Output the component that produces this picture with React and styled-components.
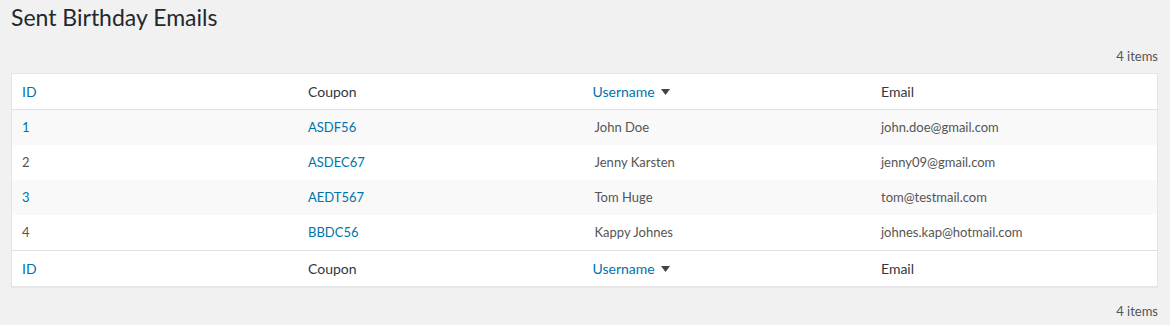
import React from 'react';
import styled, { createGlobalStyle } from 'styled-components';

const GlobalStyle = createGlobalStyle`
  html, body {
    margin: 0;
    padding: 0;
    background: #f1f1f1;
  }
  body {
    font-family: Lato, "Open Sans", sans-serif;
    color: #444;
    font-size: 13px;
  }
`;

const Wrap = styled.div`
  padding: 0 12px 0 11px;
`;

const Title = styled.h1`
  margin: 0;
  padding-top: 2px;
  font-size: 23px;
  font-weight: 400;
  line-height: 30px;
  color: #23282d;
`;

const TableNav = styled.div`
  display: flex;
  justify-content: flex-end;
  padding: ${(p) => (p.bottom ? '15px 0 5px' : '15px 0 8px')};
  font-size: 13px;
  line-height: 18px;
  color: #555;
`;

const Table = styled.table`
  width: 100%;
  table-layout: fixed;
  border-collapse: collapse;
  background: #fff;
  border: 1px solid #e5e5e5;
  box-shadow: 0 1px 1px rgba(0, 0, 0, 0.04);
`;

const Th = styled.th`
  text-align: left;
  font-weight: 400;
  font-size: 14px;
  line-height: 19px;
  padding: ${(p) => (p.sorted ? '8px 8px' : '8px 10px')};
  color: #32373c;
  border-${(p) => (p.foot ? 'top' : 'bottom')}: 1px solid #e1e1e1;
`;

const Row = styled.tr`
  background: ${(p) => (p.striped ? '#f9f9f9' : '#fff')};
`;

const Td = styled.td`
  padding: 8px 10px;
  font-size: 13px;
  line-height: 19px;
  color: #555;
`;

const Link = styled.a`
  color: #0073aa;
  text-decoration: none;
  display: inline-flex;
  align-items: center;
  gap: 6px;
`;

const Caret = styled.svg`
  width: 9px;
  height: 6px;
  fill: #444;
`;

const SortCaret = () => (
  <Caret viewBox="0 0 9 6">
    <polygon points="0,0 9,0 4.5,6" />
  </Caret>
);

const rows = [
  { id: 1, coupon: 'ASDF56', username: 'John Doe', email: 'john.doe@gmail.com' },
  { id: 2, coupon: 'ASDEC67', username: 'Jenny Karsten', email: 'jenny09@gmail.com' },
  { id: 3, coupon: 'AEDT567', username: 'Tom Huge', email: 'tom@testmail.com' },
  { id: 4, coupon: 'BBDC56', username: 'Kappy Johnes', email: 'johnes.kap@hotmail.com' },
];

const HeadRow = ({ foot }) => (
  <tr>
    <Th foot={foot}>
      <Link href="#">ID</Link>
    </Th>
    <Th foot={foot}>Coupon</Th>
    <Th foot={foot} sorted>
      <Link href="#">
        Username
        <SortCaret />
      </Link>
    </Th>
    <Th foot={foot}>Email</Th>
  </tr>
);

const App = () => (
  <Wrap>
    <GlobalStyle />
    <Title>Sent Birthday Emails</Title>
    <TableNav>4 items</TableNav>
    <Table>
      <thead>
        <HeadRow />
      </thead>
      <tbody>
        {rows.map((r, i) => (
          <Row key={r.id} striped={i % 2 === 0}>
            <Td>{i % 2 === 0 ? <Link href="#">{r.id}</Link> : r.id}</Td>
            <Td>
              <Link href="#">{r.coupon}</Link>
            </Td>
            <Td>{r.username}</Td>
            <Td>{r.email}</Td>
          </Row>
        ))}
      </tbody>
      <tfoot>
        <HeadRow foot />
      </tfoot>
    </Table>
    <TableNav bottom>4 items</TableNav>
  </Wrap>
);

export default App;
